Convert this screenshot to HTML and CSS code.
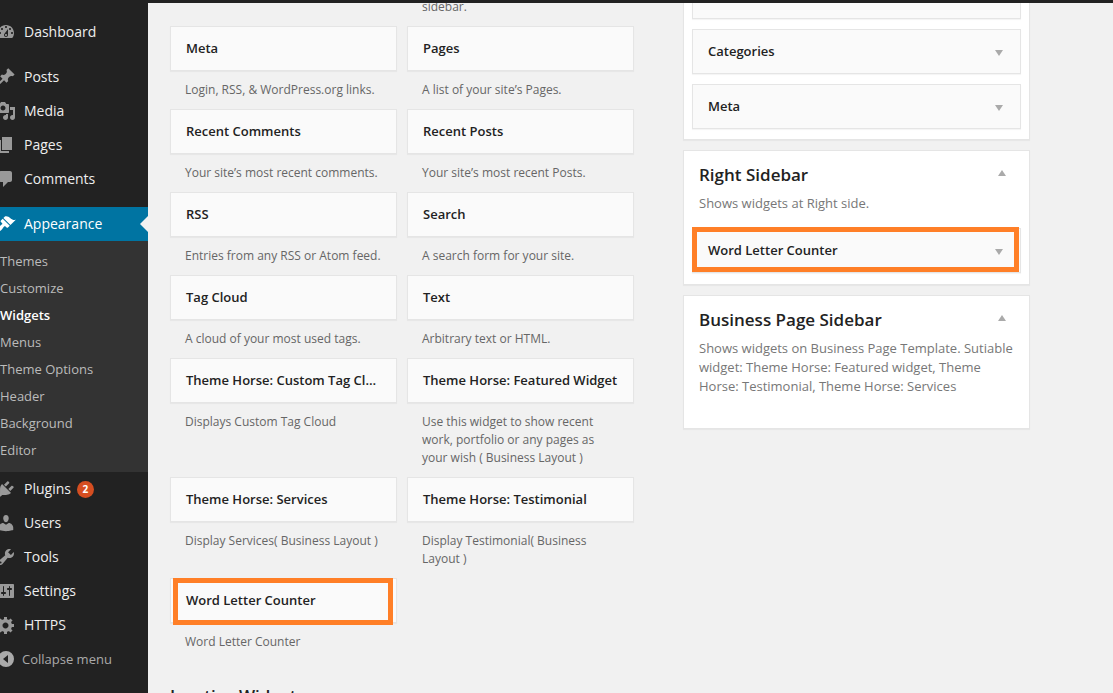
FILE: index.html
```
<!DOCTYPE html>
<html lang="en">
<head>
<meta charset="utf-8">
<title>Widgets</title>
<link rel="stylesheet" href="styles.css">
</head>
<body>
<div class="adminbar"></div>
<div class="layout">
<nav class="menu">
  <a class="item"><svg class="icon" viewBox="0 0 20 20"><path d="M3.76 16h12.48c1.1-1.37 1.76-3.11 1.76-5 0-4.42-3.58-8-8-8s-8 3.58-8 8c0 1.89.66 3.63 1.76 5zM10 4c.55 0 1 .45 1 1s-.45 1-1 1-1-.45-1-1 .45-1 1-1zM6 6c.55 0 1 .45 1 1s-.45 1-1 1-1-.45-1-1 .45-1 1-1zm8 0c.55 0 1 .45 1 1s-.45 1-1 1-1-.45-1-1 .45-1 1-1zm-5.37 5.55L12 7v6c0 1.1-.9 2-2 2s-2-.9-2-2c0-.57.24-1.08.63-1.45zM4 10c.55 0 1 .45 1 1s-.45 1-1 1-1-.45-1-1 .45-1 1-1zm12 0c.55 0 1 .45 1 1s-.45 1-1 1-1-.45-1-1 .45-1 1-1zm-5 3c0-.55-.45-1-1-1s-1 .45-1 1 .45 1 1 1 1-.45 1-1z"/></svg>Dashboard</a>
  <a class="item spaced"><svg class="icon" viewBox="0 0 20 20"><path d="M10.44 3.02l1.82-1.82 6.36 6.35-1.83 1.82c-1.05-.68-2.48-.57-3.41.36l-.75.75c-.92.93-1.04 2.35-.35 3.41l-1.83 1.82-2.41-2.41-2.8 2.79c-.42.42-3.38 2.71-3.8 2.29s1.86-3.39 2.28-3.81l2.79-2.79L4.1 9.36l1.83-1.82c1.05.69 2.48.57 3.4-.36l.75-.75c.93-.92 1.05-2.35.36-3.41z"/></svg>Posts</a>
  <a class="item"><svg class="icon" viewBox="0 0 20 20"><path d="M13 11V4c0-.55-.45-1-1-1h-1.67L9 1H5L3.67 3H2c-.55 0-1 .45-1 1v7c0 .55.45 1 1 1h10c.55 0 1-.45 1-1zM7 4.5c1.38 0 2.5 1.12 2.5 2.5S8.38 9.5 7 9.5 4.5 8.38 4.5 7 5.62 4.5 7 4.5zM14 6h5v10.5c0 1.38-1.12 2.5-2.5 2.5S14 17.88 14 16.5s1.12-2.5 2.5-2.5c.17 0 .34.02.5.05V9h-3V6zm-4 8.05V13h2v3.5c0 1.38-1.12 2.5-2.5 2.5S7 17.88 7 16.5 8.12 14 9.5 14c.17 0 .34.02.5.05z"/></svg>Media</a>
  <a class="item"><svg class="icon" viewBox="0 0 20 20"><path d="M6 15V2h10v13H6zm-1 1h8v2H3V5h2v11z"/></svg>Pages</a>
  <a class="item"><svg class="icon" viewBox="0 0 20 20"><path d="M5 2h9c1.1 0 2 .9 2 2v7c0 1.1-.9 2-2 2h-2l-5 5v-5H5c-1.1 0-2-.9-2-2V4c0-1.1.9-2 2-2z"/></svg>Comments</a>
  <a class="item spaced current"><svg class="icon" viewBox="0 0 20 20"><path d="M14.48 11.06L7.41 3.99l1.5-1.5c.5-.56 2.3-.47 3.51.32 1.21.8 1.43 1.28 2.91 2.1 1.18.64 2.45 1.26 4.45.85zm-.71.71L6.7 4.7 4.93 6.47c-.39.39-.39 1.02 0 1.41l1.06 1.06c.39.39.39 1.03 0 1.42-.6.6-1.43 1.11-2.21 1.69-.35.26-.7.53-1.01.84C1.43 14.23.4 16.08 1.4 17.07c.99 1 2.84-.03 4.18-1.36.31-.31.58-.66.85-1.02.57-.78 1.08-1.61 1.69-2.21.39-.39 1.02-.39 1.41 0l1.06 1.06c.39.39 1.02.39 1.41 0z"/></svg>Appearance</a>
  <div class="submenu">
    <a>Themes</a><a>Customize</a><a class="active">Widgets</a><a>Menus</a><a>Theme Options</a><a>Header</a><a>Background</a><a>Editor</a>
  </div>
  <a class="item"><svg class="icon" viewBox="0 0 20 20"><path d="M13.11 4.36L9.87 7.6 8 5.73l3.24-3.24c.35-.34 1.05-.2 1.56.32.52.51.66 1.21.31 1.55zm-8 1.77l.91-1.12 9.01 9.01-1.19.84c-.71.71-2.63 1.16-3.82 1.16H6.14L4.9 17.26c-.59.59-1.54.59-2.12 0-.59-.58-.59-1.53 0-2.12l1.24-1.24v-3.88c0-1.13.4-3.19 1.09-3.89zm7.26 3.97l3.24-3.24c.34-.35 1.04-.21 1.55.31.52.51.66 1.21.31 1.55l-3.24 3.25z"/></svg>Plugins<span class="count">2</span></a>
  <a class="item"><svg class="icon" viewBox="0 0 20 20"><path d="M10 9.25c-2.27 0-2.73-3.44-2.73-3.44C7 4.02 7.82 2 9.97 2c2.16 0 2.98 2.02 2.71 3.81 0 0-.41 3.44-2.68 3.44zm0 2.57L12.72 10c2.39 0 4.52 2.33 4.52 4.53v2.49s-3.65 1.13-7.24 1.13c-3.65 0-7.24-1.13-7.24-1.13v-2.49c0-2.25 1.94-4.48 4.47-4.48z"/></svg>Users</a>
  <a class="item"><svg class="icon" viewBox="0 0 20 20"><path d="M16.68 9.77c-1.34 1.34-3.3 1.67-4.95.99l-5.41 6.52c-.99.99-2.59.99-3.58 0s-.99-2.59 0-3.57l6.52-5.42c-.68-1.65-.35-3.61.99-4.95 1.28-1.28 3.12-1.62 4.72-1.06l-2.89 2.89 2.82 2.82 2.86-2.87c.53 1.58.18 3.39-1.08 4.65zM3.81 16.21c.4.39 1.04.39 1.43 0 .4-.4.4-1.04 0-1.43-.39-.4-1.03-.4-1.43 0-.39.39-.39 1.03 0 1.43z"/></svg>Tools</a>
  <a class="item"><svg class="icon" viewBox="0 0 20 20"><path d="M18 16V4c0-.55-.45-1-1-1H3c-.55 0-1 .45-1 1v12c0 .55.45 1 1 1h14c.55 0 1-.45 1-1zM8 11h1c.55 0 1 .45 1 1s-.45 1-1 1H8v1.5c0 .28-.22.5-.5.5s-.5-.22-.5-.5V13H6c-.55 0-1-.45-1-1s.45-1 1-1h1V5.5c0-.28.22-.5.5-.5s.5.22.5.5V11zm5-2h-1c-.55 0-1-.45-1-1s.45-1 1-1h1V5.5c0-.28.22-.5.5-.5s.5.22.5.5V7h1c.55 0 1 .45 1 1s-.45 1-1 1h-1v5.5c0 .28-.22.5-.5.5s-.5-.22-.5-.5V9z"/></svg>Settings</a>
  <a class="item"><svg class="icon" viewBox="0 0 20 20"><path d="M18 12h-2.18c-.17.7-.44 1.35-.81 1.93l1.54 1.54-2.1 2.1-1.54-1.54c-.58.36-1.23.63-1.91.79V19H8v-2.18c-.68-.16-1.33-.43-1.91-.79l-1.54 1.54-2.12-2.12 1.54-1.54c-.36-.58-.63-1.23-.79-1.91H1V9.03h2.17c.16-.7.44-1.35.8-1.94L2.43 5.55l2.1-2.1 1.54 1.54c.58-.37 1.24-.64 1.93-.81V2h3v2.18c.68.16 1.33.43 1.91.79l1.54-1.54 2.12 2.12-1.54 1.54c.36.59.64 1.24.8 1.94H18V12zm-8.5 1.5c1.66 0 3-1.34 3-3s-1.34-3-3-3-3 1.34-3 3 1.34 3 3 3z"/></svg>HTTPS</a>
  <a class="item collapse"><svg class="icon" viewBox="0 0 20 20"><path fill-rule="evenodd" d="M10 2a8 8 0 1 0 0 16a8 8 0 0 0 0-16zM12 6v8l-5-4z"/></svg>Collapse menu</a>
</nav>
<main class="content">
  <section class="available">
    <div class="grid">
      <p class="desc tail">sidebar.</p>
      <div><h4 class="widget">Meta</h4><p class="desc">Login, RSS, &amp; WordPress.org links.</p></div>
      <div><h4 class="widget">Pages</h4><p class="desc">A list of your site’s Pages.</p></div>
      <div><h4 class="widget">Recent Comments</h4><p class="desc">Your site’s most recent comments.</p></div>
      <div><h4 class="widget">Recent Posts</h4><p class="desc">Your site’s most recent Posts.</p></div>
      <div><h4 class="widget">RSS</h4><p class="desc">Entries from any RSS or Atom feed.</p></div>
      <div><h4 class="widget">Search</h4><p class="desc">A search form for your site.</p></div>
      <div><h4 class="widget">Tag Cloud</h4><p class="desc">A cloud of your most used tags.</p></div>
      <div><h4 class="widget">Text</h4><p class="desc">Arbitrary text or HTML.</p></div>
      <div><h4 class="widget">Theme Horse: Custom Tag Cl…</h4><p class="desc">Displays Custom Tag Cloud</p></div>
      <div><h4 class="widget">Theme Horse: Featured Widget</h4><p class="desc">Use this widget to show recent<br>work, portfolio or any pages as<br>your wish ( Business Layout )</p></div>
      <div><h4 class="widget">Theme Horse: Services</h4><p class="desc">Display Services( Business Layout )</p></div>
      <div><h4 class="widget">Theme Horse: Testimonial</h4><p class="desc">Display Testimonial( Business<br>Layout )</p></div>
      <div class="marked"><h4 class="widget">Word Letter Counter</h4><p class="desc">Word Letter Counter</p></div>
    </div>
    <h3 class="inactive">Inactive Widgets</h3>
  </section>
  <section class="sidebars">
    <div class="panel first">
      <div class="widget partial"></div>
      <h4 class="widget">Categories<i class="arrow down"></i></h4>
      <h4 class="widget">Meta<i class="arrow down"></i></h4>
    </div>
    <div class="panel right">
      <h3 class="title">Right Sidebar<i class="arrow up"></i></h3>
      <p class="about">Shows widgets at Right side.</p>
      <h4 class="widget outlined">Word Letter Counter<i class="arrow down"></i></h4>
    </div>
    <div class="panel business">
      <h3 class="title">Business Page Sidebar<i class="arrow up"></i></h3>
      <p class="about">Shows widgets on Business Page Template. Sutiable<br>widget: Theme Horse: Featured widget, Theme<br>Horse: Testimonial, Theme Horse: Services</p>
    </div>
  </section>
</main>
</div>
</body>
</html>
```
FILE: styles.css
```
*, *::after { box-sizing: border-box; }
body {
  margin: 0;
  height: 693px;
  overflow: hidden;
  background: #f1f1f1;
  color: #222;
  font-family: "Open Sans", sans-serif;
  font-size: 13px;
}
h3, h4, p { margin: 0; }
.adminbar { height: 3px; background: #222; }
.layout { display: flex; height: 690px; overflow: hidden; }

.menu { width: 148px; flex: none; padding-top: 12px; background: #222; overflow: hidden; }
.item { display: flex; align-items: center; height: 34px; color: #eee; font-size: 14px; line-height: 34px; }
.icon { width: 20px; height: 20px; margin: 0 8px 0 -4px; flex: none; fill: #999; }
.spaced { margin-top: 11px; }
.current { position: relative; background: #0074a2; color: #fff; }
.current .icon { fill: #fff; }
.current::after {
  content: "";
  position: absolute;
  right: 0;
  top: 9px;
  border: 8px solid transparent;
  border-left: 0;
  border-right-color: #f1f1f1;
}
.submenu { height: 231px; padding-top: 7px; background: #333; }
.submenu a { display: block; height: 27px; line-height: 27px; color: #bbb; font-size: 13px; }
.submenu .active { color: #fff; font-weight: 600; }
.count {
  width: 17px;
  height: 17px;
  margin-left: 6px;
  border-radius: 50%;
  background: #d54e21;
  color: #fff;
  font-size: 10px;
  font-weight: 700;
  line-height: 17px;
  text-align: center;
}
.collapse { color: #aaa; font-size: 13px; }
.collapse .icon { margin-right: 6px; fill: #aaa; }

.content { display: flex; gap: 49px; padding-left: 22px; }
.available { width: 464px; }
.grid { display: grid; grid-template-columns: 227px 227px; column-gap: 10px; }
.widget {
  display: flex;
  justify-content: space-between;
  height: 45px;
  padding: 0 15px;
  border: 1px solid #e5e5e5;
  background: #fafafa;
  box-shadow: 0 1px 1px rgba(0, 0, 0, .04);
  font-size: 13px;
  font-weight: 600;
  line-height: 43px;
  white-space: nowrap;
}
.desc { padding: 10px 15px; color: #666; font-size: 12px; line-height: 18px; white-space: nowrap; }
.tail { grid-column: 2; height: 23px; padding-top: 0; margin-top: -5px; margin-bottom: 5px; }
.marked { position: relative; }
.marked::after {
  content: "";
  position: absolute;
  left: 3px;
  top: 0;
  width: 220px;
  height: 47px;
  border: 5px solid #ff7f27;
}
.inactive { margin-top: 23px; font-size: 17px; line-height: 24px; font-weight: 600; }

.sidebars { width: 347px; }
.panel { margin-bottom: 10px; padding: 0 8px; border: 1px solid #e5e5e5; background: #fff; box-shadow: 0 1px 1px rgba(0, 0, 0, .04); }
.panel .widget + .widget { margin-top: 10px; }
.first { height: 137px; border-top: 0; }
.partial { height: 16px; border-top: 0; }
.right { height: 135px; }
.business { height: 134px; }
.title { display: flex; justify-content: space-between; padding: 12px 14px 0 7px; font-size: 17px; font-weight: 600; line-height: 24px; }
.about { padding: 7px 7px 0; color: #777; font-size: 13px; line-height: 19px; }
.arrow { width: 8px; height: 6px; background: #aaa; }
.down { margin: 20px 2px 0 0; clip-path: polygon(0 0, 100% 0, 50% 100%); }
.up { margin: 7px 1px 0 0; clip-path: polygon(50% 0, 100% 100%, 0 100%); }
.outlined { position: relative; margin-top: 15px; }
.outlined::after {
  content: "";
  position: absolute;
  left: -1px;
  top: -2px;
  width: 327px;
  height: 45px;
  border: 5px solid #ff7f27;
}
```
